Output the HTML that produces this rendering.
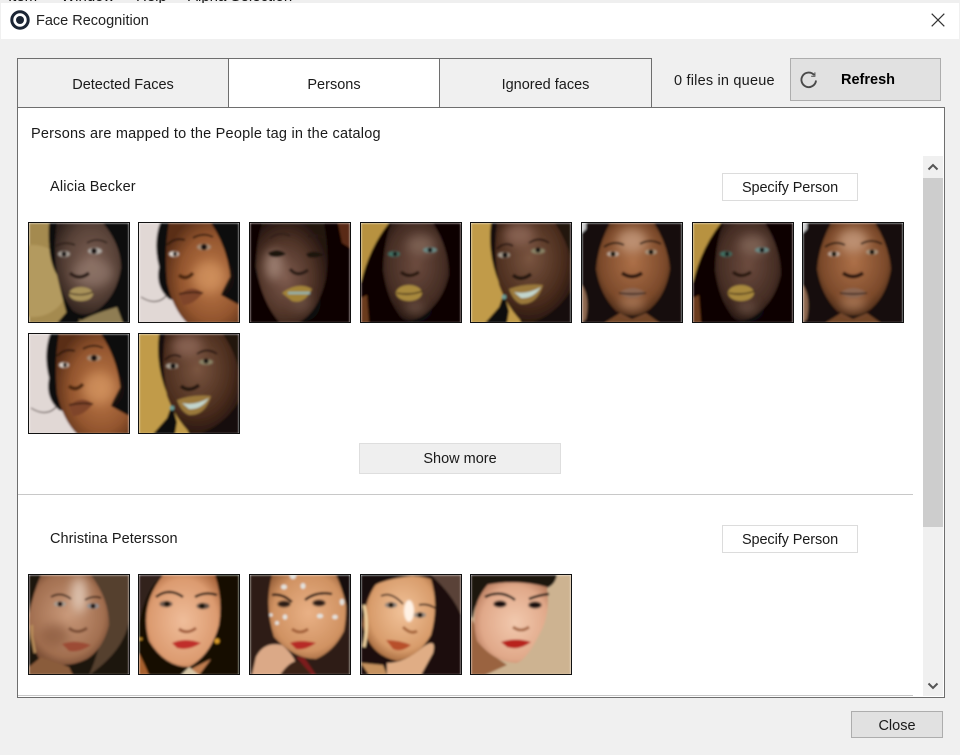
<!DOCTYPE html>
<html lang="en">
<head>
<meta charset="utf-8">
<title>Face Recognition</title>
<style>
html,body{margin:0;padding:0;background:#f0f0f0}
body{position:relative;width:960px;height:755px;overflow:hidden;font-family:"Liberation Sans",sans-serif;font-size:14.5px;color:#1a1a1a}
.a{position:absolute}
.c{display:flex;align-items:center;justify-content:center;box-sizing:border-box}
.t{position:absolute;width:100px;height:99px;border:1px solid #111;display:block;overflow:hidden}
.tab{top:58px;height:50px;border:1px solid #6e6e6e;background:#f0f0f0;padding-top:3px}
.sp{left:722px;width:136px;height:28px;background:#fff;border:1px solid #dcdcdc;padding-top:2px}
</style>
</head>
<body>
<svg width="0" height="0" style="position:absolute">
<defs>
<filter id="b" x="-10%" y="-10%" width="120%" height="120%"><feGaussianBlur stdDeviation="1"/></filter>
<filter id="e" x="-30%" y="-30%" width="160%" height="160%"><feGaussianBlur stdDeviation=".5"/></filter>
<filter id="s" x="-60%" y="-60%" width="220%" height="220%"><feGaussianBlur stdDeviation="5"/></filter>
<radialGradient id="g1" cx=".55" cy=".42" r=".62"><stop offset="0" stop-color="#7d6155"/><stop offset=".65" stop-color="#564036"/><stop offset="1" stop-color="#2e211c"/></radialGradient>
<radialGradient id="g2" cx=".62" cy=".55" r=".65"><stop offset="0" stop-color="#c07c4b"/><stop offset=".65" stop-color="#93552e"/><stop offset="1" stop-color="#5a2f18"/></radialGradient>
<radialGradient id="g3" cx=".42" cy=".55" r=".62"><stop offset="0" stop-color="#7d5a4d"/><stop offset=".6" stop-color="#503428"/><stop offset="1" stop-color="#23140f"/></radialGradient>
<radialGradient id="g4" cx=".5" cy=".42" r=".62"><stop offset="0" stop-color="#6c4b3e"/><stop offset=".7" stop-color="#452d24"/><stop offset="1" stop-color="#20130e"/></radialGradient>
<radialGradient id="g5" cx=".45" cy=".35" r=".7"><stop offset="0" stop-color="#7a5540"/><stop offset=".65" stop-color="#4a2c1d"/><stop offset="1" stop-color="#21120b"/></radialGradient>
<radialGradient id="g6" cx=".5" cy=".42" r=".62"><stop offset="0" stop-color="#ad7048"/><stop offset=".7" stop-color="#7c4a2b"/><stop offset="1" stop-color="#3e2212"/></radialGradient>
<radialGradient id="g7" cx=".48" cy=".45" r=".65"><stop offset="0" stop-color="#c9997a"/><stop offset=".7" stop-color="#a26f50"/><stop offset="1" stop-color="#5e3722"/></radialGradient>
<radialGradient id="g8" cx=".5" cy=".5" r=".65"><stop offset="0" stop-color="#efbd9a"/><stop offset=".7" stop-color="#dc9b70"/><stop offset="1" stop-color="#a05c33"/></radialGradient>
<radialGradient id="g9" cx=".52" cy=".45" r=".65"><stop offset="0" stop-color="#e9b186"/><stop offset=".7" stop-color="#d09262"/><stop offset="1" stop-color="#8e5732"/></radialGradient>
<radialGradient id="g10" cx=".55" cy=".42" r=".65"><stop offset="0" stop-color="#f1c299"/><stop offset=".7" stop-color="#d89c6b"/><stop offset="1" stop-color="#94592f"/></radialGradient>
<radialGradient id="g11" cx=".55" cy=".5" r=".65"><stop offset="0" stop-color="#f2c9ae"/><stop offset=".7" stop-color="#e0a889"/><stop offset="1" stop-color="#ad7052"/></radialGradient>

<symbol id="f1" viewBox="0 0 100 100"><g filter="url(#b)">
<rect width="100" height="100" fill="#a48a50"/><circle cx="4" cy="58" r="36" fill="#b39a5f"/>
<path d="M20 0H100V100H60L38 92Q32 70 28 52Q18 36 20 0Z" fill="#0c0909"/>
<path d="M28 100L42 84 52 100Z" fill="#0a0808"/>
<path d="M28 0H74Q92 22 92 45Q88 72 70 86Q56 96 44 88Q34 76 28 52Q24 25 28 0Z" fill="url(#g1)"/>
<path d="M48 100Q60 92 88 84L94 100Z" fill="#8f7d52"/>
<ellipse cx="64" cy="50" rx="20" ry="14" fill="#9a8074" opacity=".6" filter="url(#s)"/>
<ellipse cx="35" cy="31" rx="6" ry="3" fill="#a9a29a" filter="url(#e)"/><circle cx="35" cy="31" r="2.6" fill="#120c0c"/>
<ellipse cx="66" cy="28" rx="7" ry="3.2" fill="#b0aaa4" filter="url(#e)"/><circle cx="65" cy="28" r="3" fill="#120c0c"/>
<path d="M27 23Q36 18 46 22M58 20Q68 14 78 20" stroke="#2a1c18" stroke-width="1.6" fill="none"/>
<path d="M41 50Q50 58 60 50" stroke="#2b1c18" stroke-width="3.4" fill="none"/>
<ellipse cx="52" cy="71" rx="12" ry="7" fill="#a8925a"/><path d="M40 70Q52 74 64 69" stroke="#3c2a1c" stroke-width="1.3" fill="none"/>
</g></symbol>

<symbol id="f2" viewBox="0 0 100 100"><g filter="url(#b)">
<rect width="100" height="100" fill="#e1d8d5"/>
<path d="M21 0H100V92L60 85 30 76Q16 64 20 44Q14 20 21 0Z" fill="#0f0b0a"/>
<path d="M2 74Q18 84 28 72" stroke="#3a2a25" stroke-width="1" fill="none"/>
<path d="M30 0H74Q90 26 92 52Q84 66 82 72L100 82V100H48Q34 86 28 60Q25 28 30 0Z" fill="url(#g2)"/>
<path d="M72 0H100V72L92 68Q92 30 72 0Z" fill="#100c0a"/>
<ellipse cx="70" cy="54" rx="16" ry="15" fill="#d59763" opacity=".65" filter="url(#s)"/>
<ellipse cx="35" cy="31" rx="5" ry="2.6" fill="#e6e0da" filter="url(#e)"/><circle cx="36" cy="31" r="2.2" fill="#150e0b"/>
<ellipse cx="65" cy="24" rx="7" ry="3.2" fill="#a88e78" filter="url(#e)"/><circle cx="65" cy="24" r="3.2" fill="#150e0b"/>
<path d="M28 22Q36 14 46 17M54 15Q64 9 74 14" stroke="#2a150c" stroke-width="1.8" fill="none"/>
<path d="M40 52Q47 58 54 50" stroke="#4c2510" stroke-width="3.6" fill="none"/>
<path d="M40 72Q52 60 64 70Q54 82 44 82Z" fill="#7f452a"/><path d="M40 71Q52 68 64 70" stroke="#33180b" stroke-width="1.5" fill="none"/>
</g></symbol>

<symbol id="f3" viewBox="0 0 100 100"><g filter="url(#b)">
<rect width="100" height="100" fill="#080606"/><path d="M88 0H100V25L92 20Z" fill="#5a2a12"/>
<path d="M12 0H74Q80 30 76 56Q68 90 48 100H30Q12 80 6 44Q6 20 12 0Z" fill="url(#g3)"/>
<ellipse cx="24" cy="42" rx="9" ry="15" fill="#ab8e80" opacity=".75" filter="url(#s)"/>
<ellipse cx="52" cy="80" rx="10" ry="10" fill="#775c4f" opacity=".5" filter="url(#s)"/>
<path d="M18 30Q28 24 36 31Q28 36 20 33Z" fill="#1c1210"/><path d="M56 31Q64 26 74 32Q64 36 58 34Z" fill="#1c1210"/>
<path d="M20 15Q30 8 40 13M58 14Q66 10 74 15" stroke="#2c1c18" stroke-width="1.4" fill="none"/>
<path d="M40 46Q47 55 58 47" stroke="#2b1a15" stroke-width="3.2" fill="none"/>
<path d="M32 70Q48 58 62 66Q54 82 42 78Z" fill="#a38339"/><path d="M38 70H60" stroke="#93b2ad" stroke-width="2.6"/>
</g></symbol>

<symbol id="f4" viewBox="0 0 100 100"><g filter="url(#b)">
<rect width="100" height="100" fill="#b8923f"/>
<path d="M28 0Q8 25 0 60V100H100V0Z" fill="#070506"/>
<path d="M0 75L6 72 8 100H0Z" fill="#6a3a1c"/>
<path d="M30 0H72Q88 25 88 52Q82 80 60 94Q44 102 38 92Q26 76 22 48Q22 22 30 0Z" fill="url(#g4)"/>
<ellipse cx="60" cy="22" rx="14" ry="10" fill="#8d7264" opacity=".65" filter="url(#s)"/>
<ellipse cx="54" cy="85" rx="10" ry="6" fill="#7e6253" opacity=".6" filter="url(#s)"/>
<ellipse cx="33" cy="31" rx="6" ry="2.8" fill="#3f7064" filter="url(#e)"/><circle cx="34" cy="31" r="2.2" fill="#0b0b0b"/>
<ellipse cx="69" cy="27" rx="7" ry="2.8" fill="#6b8a86" filter="url(#e)"/><circle cx="69" cy="27" r="2.4" fill="#0b0b0b"/>
<path d="M40 49Q48 56 58 49" stroke="#27160f" stroke-width="3.2" fill="none"/>
<ellipse cx="48" cy="70" rx="13" ry="8" fill="#a8893d"/><path d="M36 70Q48 73 62 68" stroke="#3b2816" stroke-width="1.4" fill="none"/>
</g></symbol>

<symbol id="f5" viewBox="0 0 100 100"><g filter="url(#b)">
<rect width="100" height="100" fill="#c19b49"/>
<path d="M20 0H100V100H50Q40 70 28 60Q16 30 20 0Z" fill="#170e0a"/>
<path d="M26 0H84Q100 20 100 45V78Q88 96 70 100H52Q36 84 28 62Q22 30 26 0Z" fill="url(#g5)"/>
<path d="M60 100Q84 92 100 68V100Z" fill="#170e09"/>
<path d="M84 0H100V36Q96 18 84 0Z" fill="#21130c"/>
<path d="M14 100L28 84 33 70 38 88 36 100Z" fill="#0b0908"/><circle cx="33" cy="74" r="2.4" fill="#6c9d96"/>
<ellipse cx="48" cy="12" rx="15" ry="11" fill="#90695a" opacity=".8" filter="url(#s)"/>
<ellipse cx="33" cy="32" rx="6" ry="2.8" fill="#aba294" filter="url(#e)"/><circle cx="34" cy="32" r="2.8" fill="#0e0a08"/>
<ellipse cx="67" cy="28" rx="7" ry="2.8" fill="#8a8468" filter="url(#e)"/><circle cx="67" cy="27" r="2.6" fill="#0e0a08"/>
<path d="M26 26Q34 18 42 23M58 20Q68 13 78 20" stroke="#1c0f09" stroke-width="1.6" fill="none"/>
<path d="M42 52Q50 59 60 51" stroke="#24130b" stroke-width="3.6" fill="none"/>
<path d="M38 66Q54 60 72 62Q66 82 50 81Q42 78 38 66Z" fill="#9a783a"/>
<path d="M43 69Q56 72 70 64Q62 76 50 75Z" fill="#c2d6ce"/>
</g></symbol>

<symbol id="f6" viewBox="0 0 100 100"><g filter="url(#b)">
<rect width="100" height="100" fill="#170d08"/><path d="M0 0H4V6L0 10Z" fill="#ccc"/>
<path d="M0 62Q8 74 4 96L0 100Z" fill="#8d674f"/>
<path d="M28 0H72Q86 22 88 46Q84 72 68 86Q52 98 34 88Q18 72 14 46Q16 22 28 0Z" fill="url(#g6)"/>
<path d="M22 100L38 90 50 96 64 90 78 100Z" fill="#714428"/>
<ellipse cx="50" cy="18" rx="15" ry="12" fill="#c9a084" opacity=".75" filter="url(#s)"/>
<ellipse cx="50" cy="80" rx="13" ry="8" fill="#bb8a68" opacity=".6" filter="url(#s)"/>
<ellipse cx="31" cy="31" rx="6" ry="2.6" fill="#bdaa9b" filter="url(#e)"/><circle cx="31" cy="31" r="2.6" fill="#0e0806"/>
<ellipse cx="69" cy="29" rx="6" ry="2.6" fill="#a9967f" filter="url(#e)"/><circle cx="69" cy="29" r="2.6" fill="#0e0806"/>
<path d="M22 24Q32 17 42 22M58 21Q68 15 79 21" stroke="#24130b" stroke-width="1.8" fill="none"/>
<path d="M40 50Q50 57 60 50" stroke="#2a160c" stroke-width="3.6" fill="none"/>
<path d="M37 70Q50 60 64 70Q50 80 37 70Z" fill="#8c6651"/><path d="M37 70Q50 72 64 70" stroke="#2f1c12" stroke-width="1.5" fill="none"/>
</g></symbol>

<symbol id="f7" viewBox="0 0 100 100"><g filter="url(#b)">
<rect width="100" height="100" fill="#1c120e"/>
<path d="M62 0H100V45Q96 75 60 100Q78 60 70 30Z" fill="#54402f"/>
<path d="M12 0H62Q80 24 80 50Q74 74 58 84Q34 96 10 84Q-2 60 0 40Q4 18 12 0Z" fill="url(#g7)"/>
<path d="M0 92L12 82 40 92 44 100H0Z" fill="#8a5b3a"/>
<ellipse cx="26" cy="60" rx="14" ry="11" fill="#7c4c33" opacity=".5" filter="url(#s)"/>
<ellipse cx="50" cy="20" rx="8" ry="18" fill="#e8d3c2" opacity=".8" filter="url(#s)"/>
<ellipse cx="31" cy="29" rx="6" ry="2.8" fill="#a89d92" filter="url(#e)"/><circle cx="31" cy="29" r="2.6" fill="#1a110d"/>
<ellipse cx="64" cy="31" rx="6" ry="2.8" fill="#908f92" filter="url(#e)"/><circle cx="64" cy="31" r="2.6" fill="#1a110d"/>
<path d="M22 22Q32 16 42 24M56 25Q64 20 72 23" stroke="#3a2016" stroke-width="1.8" fill="none"/>
<path d="M40 53Q48 60 58 53" stroke="#7a4e36" stroke-width="3" fill="none"/>
<path d="M33 69Q46 64 62 70Q50 78 40 76Z" fill="#9c4c35"/>
<path d="M3 50L3 62 6 78" stroke="#b98e5a" stroke-width="2.4" fill="none"/>
</g></symbol>

<symbol id="f8" viewBox="0 0 100 100"><g filter="url(#b)">
<rect width="100" height="100" fill="#120a06"/>
<path d="M0 0H24Q6 14 0 50Z" fill="#33241c"/>
<path d="M24 0H76Q84 24 80 50Q72 80 50 92Q26 92 10 66Q0 30 24 0Z" fill="url(#g8)"/>
<path d="M56 92L72 84 60 100H42Z" fill="#bf7d50"/><path d="M42 100L50 92 60 100Z" fill="#d8c8a8"/>
<path d="M0 78Q6 90 10 100H0Z" fill="#a8602e"/>
<ellipse cx="27" cy="29" rx="6.4" ry="3" fill="#66544c" filter="url(#e)"/><circle cx="28" cy="29" r="3" fill="#1c120d"/>
<ellipse cx="64" cy="31" rx="6.4" ry="3" fill="#5c4d44" filter="url(#e)"/><circle cx="63" cy="31" r="3" fill="#1c120d"/>
<path d="M17 22Q30 12 44 22M56 22Q66 16 78 20" stroke="#22120c" stroke-width="2.4" fill="none"/>
<path d="M40 54Q48 60 57 53" stroke="#a25f3e" stroke-width="3" fill="none"/>
<path d="M33 68Q46 62 62 68Q50 76 38 73Z" fill="#c02f2a"/>
<circle cx="78" cy="66" r="2.6" fill="#d99a28"/><circle cx="2" cy="64" r="1.4" fill="#c78f28"/>
</g></symbol>

<symbol id="f9" viewBox="0 0 100 100"><g filter="url(#b)">
<rect width="100" height="100" fill="#2d1d14"/>
<path d="M22 0H88Q100 20 94 56Q84 76 66 84Q44 84 24 62Q14 30 22 0Z" fill="url(#g9)"/>
<path d="M86 0H100V70Q100 30 86 0Z" fill="#17100c"/>
<path d="M2 100L6 82Q14 66 32 70Q42 78 46 88L38 100Z" fill="#dba987"/>
<path d="M30 100Q38 88 46 86Q58 92 66 100Z" fill="#3a2416"/>
<path d="M46 82L62 100H66L54 82Z" fill="#7c1e1e"/>
<circle cx="43" cy="1" r="3.2" fill="#e4e2dc"/><ellipse cx="34" cy="12" rx="3" ry="2.5" fill="#e4e2dc"/><ellipse cx="53" cy="11" rx="2.5" ry="3" fill="#e4e2dc"/><ellipse cx="92" cy="27" rx="2.3" ry="3.2" fill="#e4e2dc"/><ellipse cx="70" cy="41" rx="3.2" ry="2.3" fill="#e4e2dc"/><ellipse cx="85" cy="42" rx="2.8" ry="2.3" fill="#e4e2dc"/><ellipse cx="35" cy="42" rx="2.3" ry="2.6" fill="#e4e2dc"/><circle cx="21" cy="40" r="1.7" fill="#e4e2dc"/><circle cx="27" cy="48" r="2" fill="#e4e2dc"/>
<ellipse cx="34" cy="29" rx="6.4" ry="3.2" fill="#2a1a14" filter="url(#e)"/><ellipse cx="69" cy="28" rx="6.4" ry="3.2" fill="#2a1a14" filter="url(#e)"/>
<path d="M22 20Q32 18 42 27M55 25Q66 16 82 19" stroke="#20110b" stroke-width="2.4" fill="none"/>
<path d="M42 54Q50 60 58 54" stroke="#a4623a" stroke-width="3" fill="none"/>
<path d="M40 68Q50 64 66 68Q54 76 46 74Z" fill="#b72c25"/>
</g></symbol>

<symbol id="f10" viewBox="0 0 100 100"><g filter="url(#b)">
<rect width="100" height="100" fill="#1d100b"/><path d="M70 0H100V40Q92 20 70 0Z" fill="#5a4338"/>
<path d="M20 3Q50 -2 70 4Q78 30 70 60Q58 82 36 86Q8 80 2 50Q4 20 20 3Z" fill="url(#g10)"/>
<path d="M0 0H62Q30 2 14 10Q4 18 0 32Z" fill="#191010"/>
<path d="M26 88Q44 88 62 72Q76 62 72 78L60 100H26Z" fill="#e0ad85"/>
<path d="M0 88L22 90 26 100H8Z" fill="#c6925f"/>
<path d="M3 30Q8 50 3 72" stroke="#f0d29f" stroke-width="3" fill="none"/>
<ellipse cx="48" cy="36" rx="5" ry="11" fill="#fff2e5" filter="url(#e)"/>
<ellipse cx="30" cy="30" rx="6" ry="2.8" fill="#8b8078" filter="url(#e)"/><circle cx="30" cy="30" r="2.7" fill="#1a120e"/>
<ellipse cx="59" cy="40" rx="6" ry="2.8" fill="#958a81" filter="url(#e)"/><circle cx="59" cy="40" r="2.7" fill="#1a120e"/>
<path d="M20 21Q30 16 42 29M58 30Q66 28 74 33" stroke="#3e2217" stroke-width="1.8" fill="none"/>
<path d="M42 52Q50 60 56 56" stroke="#a8683e" stroke-width="3" fill="none"/>
<path d="M25 65Q38 65 50 70Q40 78 32 74Z" fill="#b84f2c"/>
</g></symbol>

<symbol id="f11" viewBox="0 0 100 100"><g filter="url(#b)">
<rect width="100" height="100" fill="#cdb391"/>
<path d="M0 0H86Q84 12 72 14Q40 8 12 18L0 40Z" fill="#1c1411"/>
<path d="M0 100V42L16 76 36 90 14 100Z" fill="#9a6440"/>
<path d="M14 10Q46 4 76 12Q80 40 68 60Q56 84 46 88Q24 88 6 66Q-2 36 14 10Z" fill="url(#g11)"/>
<path d="M0 14Q8 6 20 6Q6 20 2 42L0 44Z" fill="#1c1411"/>
<ellipse cx="29" cy="29" rx="6.4" ry="3.2" fill="#191110" filter="url(#e)"/><ellipse cx="64" cy="30" rx="6.4" ry="3.2" fill="#191110" filter="url(#e)"/>
<path d="M14 22Q30 14 44 25M58 24Q68 20 78 19" stroke="#1d1210" stroke-width="2.4" fill="none"/>
<path d="M42 52Q50 58 58 52" stroke="#aa6e4e" stroke-width="3" fill="none"/>
<path d="M30 67Q44 62 60 67Q48 76 36 72Z" fill="#b8201f"/>
</g></symbol>
</defs>
</svg>

<!-- clipped menu behind the dialog -->
<div class="a" style="left:0;top:0;width:960px;height:3px;overflow:hidden;background:#efefef;font-size:15px;color:#111">
<span class="a" style="left:8px;top:-12px">Item</span>
<span class="a" style="left:61px;top:-12px">Window</span>
<span class="a" style="left:136px;top:-12px">Help</span>
<span class="a" style="left:188px;top:-12px">Alpha Selection</span>
</div>

<!-- title bar -->
<div class="a" style="left:1px;top:3px;width:958px;height:36px;background:#fff"></div>
<svg class="a" style="left:9px;top:9px" width="22" height="22" viewBox="0 0 22 22"><circle cx="11" cy="11" r="8.2" fill="none" stroke="#1b2534" stroke-width="3"/><circle cx="11" cy="11" r="4" fill="#1b2534"/></svg>
<div class="a" style="left:36px;top:13px;font-size:14.5px;line-height:17px;color:#222">Face Recognition</div>
<svg class="a" style="left:931px;top:13px" width="14" height="14" viewBox="0 0 14 14"><path d="M.7.7L13.3 13.3M13.3.7L.7 13.3" stroke="#333" stroke-width="1.2" fill="none"/></svg>

<!-- tabs -->
<div class="a" style="left:17px;top:107px;width:926px;height:589px;background:#fff;border:1px solid #6e6e6e"></div>
<div class="a c tab" style="left:17px;width:212px">Detected Faces</div>
<div class="a c tab" style="left:228px;width:212px;background:#fff">Persons</div>
<div class="a c tab" style="left:439px;width:213px">Ignored faces</div>

<div class="a" style="left:674px;top:73px;line-height:17px;letter-spacing:.2px">0 files in queue</div>
<div class="a" style="left:790px;top:58px;width:151px;height:43px;box-sizing:border-box;background:#e1e1e1;border:1px solid #adadad"></div>
<svg class="a" style="left:799px;top:70px" width="20" height="20" viewBox="0 0 20 20"><path d="M15.2 5A7.3 7.3 0 1 0 17 10.5" fill="none" stroke="#4a4a4a" stroke-width="1.9"/><path d="M15.9 2.4V6.2H12.2" fill="none" stroke="#4a4a4a" stroke-width="1"/></svg>
<div class="a" style="left:841px;top:72px;font-weight:700;font-size:14.5px;line-height:17px;color:#000">Refresh</div>

<div class="a" style="left:31px;top:126px;line-height:17px;letter-spacing:.22px">Persons are mapped to the People tag in the catalog</div>

<!-- scrollbar -->
<div class="a" style="left:923px;top:156px;width:20px;height:540px;background:#f0f0f0"></div>
<div class="a" style="left:923px;top:178px;width:20px;height:349px;background:#cdcdcd"></div>
<svg class="a" style="left:927px;top:162px" width="12" height="10" viewBox="0 0 12 10"><path d="M1.5 7.5L6 3l4.5 4.5" fill="none" stroke="#555" stroke-width="2"/></svg>
<svg class="a" style="left:927px;top:681px" width="12" height="10" viewBox="0 0 12 10"><path d="M1.5 2.5L6 7l4.5-4.5" fill="none" stroke="#555" stroke-width="2"/></svg>

<!-- Alicia -->
<div class="a" style="left:50px;top:179px;line-height:17px;letter-spacing:.15px">Alicia Becker</div>
<div class="a c sp" style="top:173px;letter-spacing:-.1px">Specify Person</div>

<svg class="t" style="left:28px;top:222px"><use href="#f1" width="100" height="100"/></svg>
<svg class="t" style="left:138px;top:222px"><use href="#f2" width="100" height="100"/></svg>
<svg class="t" style="left:249px;top:222px"><use href="#f3" width="100" height="100"/></svg>
<svg class="t" style="left:360px;top:222px"><use href="#f4" width="100" height="100"/></svg>
<svg class="t" style="left:470px;top:222px"><use href="#f5" width="100" height="100"/></svg>
<svg class="t" style="left:581px;top:222px"><use href="#f6" width="100" height="100"/></svg>
<svg class="t" style="left:692px;top:222px"><use href="#f4" width="100" height="100"/></svg>
<svg class="t" style="left:802px;top:222px"><use href="#f6" width="100" height="100"/></svg>
<svg class="t" style="left:28px;top:333px"><use href="#f2" width="100" height="100"/></svg>
<svg class="t" style="left:138px;top:333px"><use href="#f5" width="100" height="100"/></svg>

<div class="a c" style="left:359px;top:443px;width:202px;height:31px;background:#efefef;border:1px solid #dedede">Show more</div>
<div class="a" style="left:18px;top:494px;width:895px;height:1px;background:#c8c8c8"></div>

<!-- Christina -->
<div class="a" style="left:50px;top:531px;line-height:17px;letter-spacing:.06px">Christina Petersson</div>
<div class="a c sp" style="top:525px;letter-spacing:-.1px">Specify Person</div>

<svg class="t" style="left:28px;top:574px"><use href="#f7" width="100" height="100"/></svg>
<svg class="t" style="left:138px;top:574px"><use href="#f8" width="100" height="100"/></svg>
<svg class="t" style="left:249px;top:574px"><use href="#f9" width="100" height="100"/></svg>
<svg class="t" style="left:360px;top:574px"><use href="#f10" width="100" height="100"/></svg>
<svg class="t" style="left:470px;top:574px"><use href="#f11" width="100" height="100"/></svg>

<div class="a" style="left:18px;top:695px;width:895px;height:1px;background:#c8c8c8"></div>

<!-- footer -->
<div class="a c" style="left:851px;top:711px;width:92px;height:27px;background:#e1e1e1;border:1px solid #adadad;padding-top:2px">Close</div>
</body>
</html>
